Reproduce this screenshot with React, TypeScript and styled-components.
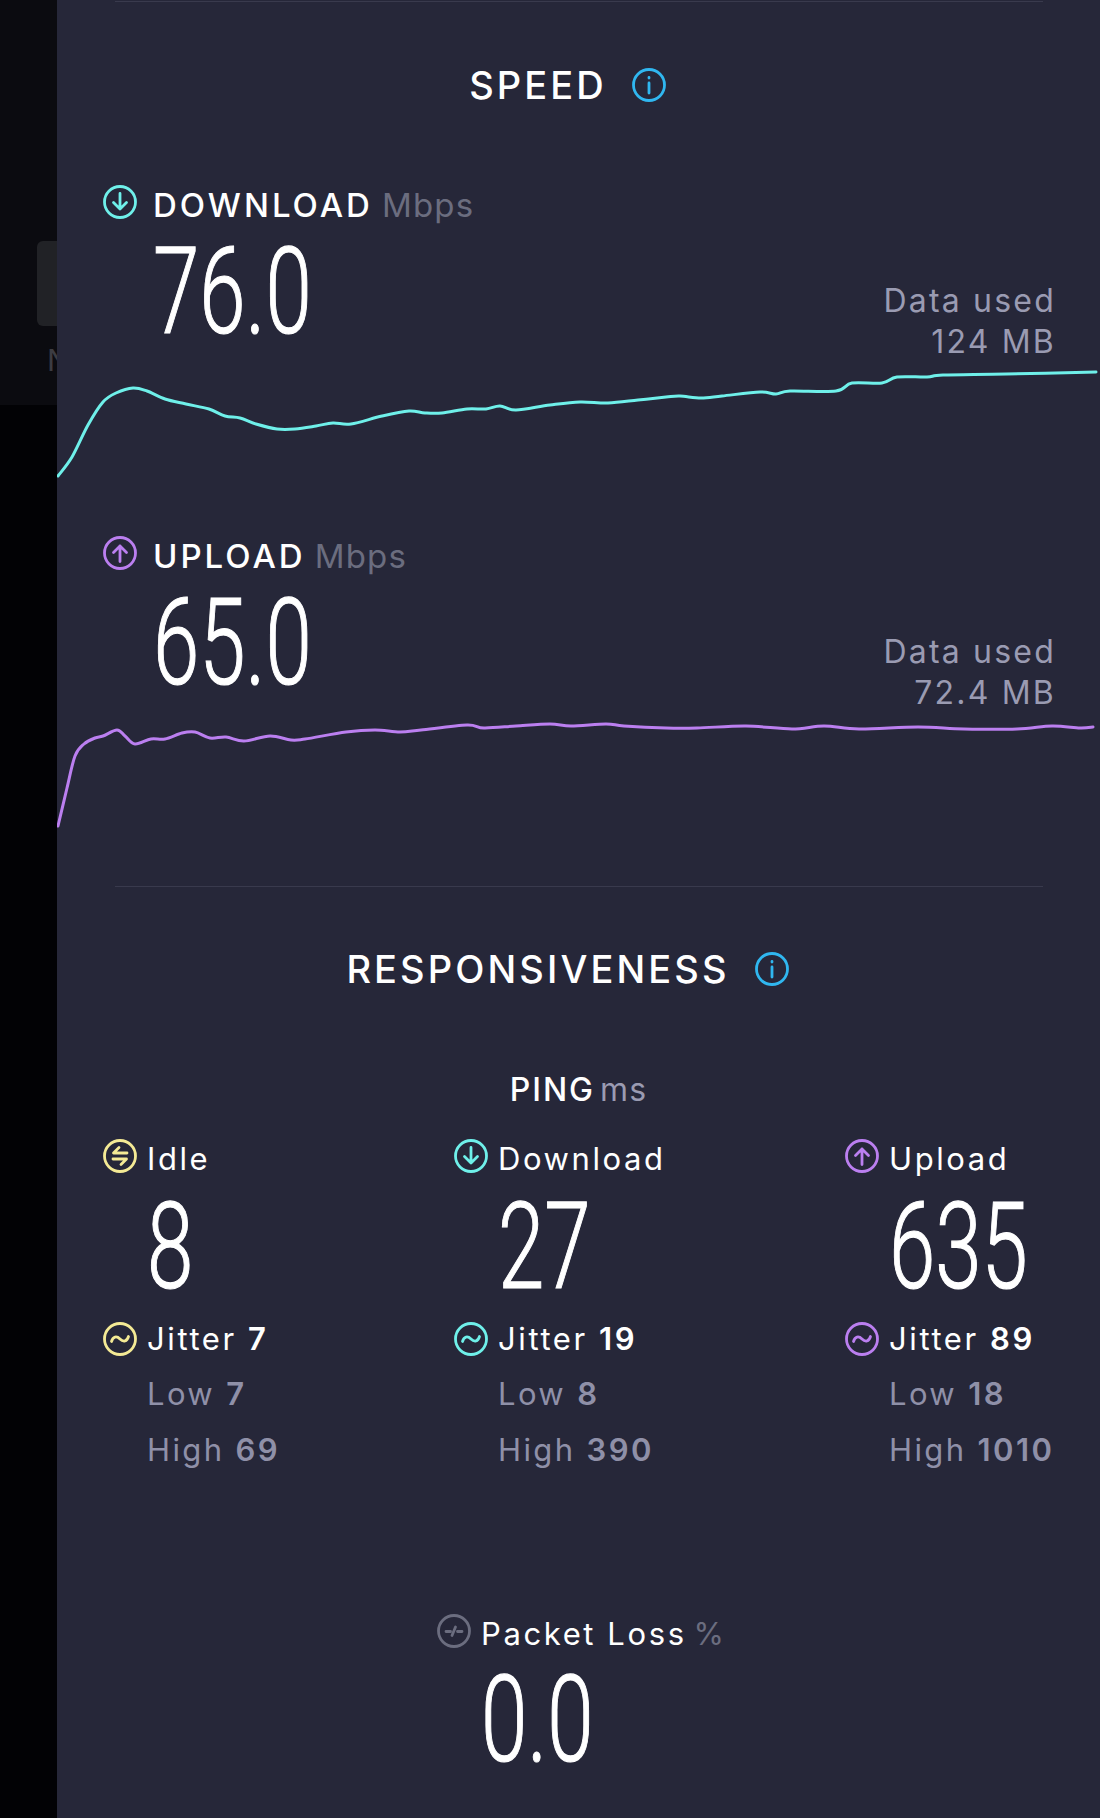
import styled, { createGlobalStyle } from 'styled-components';

const GlobalStyle = createGlobalStyle`
  html, body { margin: 0; padding: 0; background: #020205; }
  body { font-family: Inter, "Noto Sans", sans-serif; }
`;

const CYAN = '#6ff0ea';
const PURPLE = '#bb7ff0';
const YELLOW = '#f4ea95';
const BLUE = '#30b7f0';
const GRAY = '#6b6d7f';

type Pt = [number, number];

const downloadLine: Pt[] = [[58,476],[72,457],[88,425],[103,402],[116,393],[133,388],[147,391],[165,399],[186,404],[209,409],[225,416],[240,418],[256,424],[277,429],[295,429],[316,426],[333,423],[351,424],[382,416],[409,411],[425,413],[442,413],[467,409],[486,409],[500,406],[516,410],[550,405],[580,402],[608,403],[638,400],[666,397],[680,396],[701,398],[722,396],[760,392],[776,394],[790,391],[836,391],[852,383],[882,383],[897,377],[927,377],[943,375],[1006,374],[1096,372]];
const uploadLine: Pt[] = [[58,825],[67,787],[75,755],[84,743],[95,737],[103,735],[117,729],[125,735],[135,743],[151,738],[165,738],[182,732],[195,731],[210,737],[226,736],[244,740],[270,735],[291,739],[305,738],[346,731],[375,729],[400,731],[421,729],[467,724],[484,727],[516,725],[550,723],[571,725],[606,723],[624,725],[666,727],[697,727],[746,725],[792,728],[824,725],[859,728],[918,726],[964,728],[1017,728],[1052,725],[1080,727],[1093,726]];

// catmull-rom through the sampled points, shifted into the chart's own box
const toPath = (pts: Pt[], top: number) => {
  const p = pts.map(([x, y]): Pt => [x - 57, y - top]);
  let d = `M${p[0][0]} ${p[0][1]}`;
  for (let i = 0; i < p.length - 1; i++) {
    const a = p[Math.max(i - 1, 0)];
    const b = p[i];
    const c = p[i + 1];
    const e = p[Math.min(i + 2, p.length - 1)];
    d += `C${(b[0] + (c[0] - a[0]) / 6).toFixed(1)} ${(b[1] + (c[1] - a[1]) / 6).toFixed(1)} ${(c[0] - (e[0] - b[0]) / 6).toFixed(1)} ${(c[1] - (e[1] - b[1]) / 6).toFixed(1)} ${c[0]} ${c[1]}`;
  }
  return d;
};

const Page = styled.div`
  display: flex;
  width: 1100px;
  height: 1818px;
  overflow: hidden;
`;

const Rail = styled.div`
  width: 57px;
  flex: none;
  overflow: hidden;
`;

const RailTop = styled.div`
  height: 405px;
  box-sizing: border-box;
  padding: 241px 0 0 37px;
  background: #0b0b10;
`;

const RailButton = styled.div`
  width: 40px;
  height: 85px;
  border-radius: 6px;
  background: #212226;
`;

const RailLabel = styled.div`
  margin: 16px 0 0 10px;
  font-size: 30px;
  line-height: 36px;
  color: #3c3c42;
`;

const Panel = styled.div`
  flex: 1;
  background: #262739;
  color: #fff;
`;

const Divider = styled.div<{ $top: number }>`
  height: 1px;
  margin: ${p => p.$top}px 57px 0 58px;
  background: #393a4d;
`;

const SectionTitle = styled.div<{ $top: number }>`
  display: flex;
  align-items: center;
  justify-content: center;
  gap: 25px;
  height: 40px;
  margin-top: ${p => p.$top}px;
  padding-right: 22px;
  font-size: 38px;
  font-weight: 500;
  letter-spacing: 3.1px;
`;

const Metric = styled.div<{ $top: number }>`
  display: flex;
  justify-content: space-between;
  margin-top: ${p => p.$top}px;
  padding: 0 46px;
`;

const MetricMain = styled.div`
  padding-bottom: 26px;
`;

const MetricHeader = styled.div`
  display: flex;
  align-items: center;
  gap: 16px;
  height: 34px;
  font-size: 33px;
  font-weight: 500;
  letter-spacing: 3px;
  white-space: nowrap;
`;

const HeaderText = styled.span`
  padding-top: 5px;
`;

const Unit = styled.span<{ $color?: string; $gap: number }>`
  margin-left: ${p => p.$gap}px;
  font-weight: 400;
  letter-spacing: 1.2px;
  color: ${p => p.$color ?? GRAY};
`;

const Value = styled.div<{ $top: number; $left: number }>`
  height: 90px;
  margin: ${p => p.$top}px 0 0 ${p => p.$left}px;
  font-family: Roboto, sans-serif;
  font-size: 120px;
  font-weight: 300;
  line-height: 93px;
  white-space: nowrap;
  -webkit-text-stroke: 1.2px #fff;
  transform: scaleX(0.695);
  transform-origin: left center;
`;

const DataUsed = styled.div`
  align-self: flex-end;
  margin-right: -2px;
  text-align: right;
  font-size: 32px;
  line-height: 41px;
  letter-spacing: 2.2px;
  color: #9a9bb2;
`;

const Chart = styled.svg`
  display: block;
  width: 1043px;
  height: 120px;
  margin-top: 3px;
  fill: none;
  stroke-width: 3;
  stroke-linecap: round;
  stroke-linejoin: round;
`;

const PingTitle = styled.div`
  height: 36px;
  margin-top: 83px;
  line-height: 36px;
  font-size: 32px;
  font-weight: 500;
  letter-spacing: 2px;
  text-align: center;
`;

const PingGrid = styled.div`
  display: grid;
  grid-template-columns: 351px 391px 1fr;
  margin-top: 31px;
  padding-left: 46px;
`;

const PingColumn = styled.div``;

const IconRow = styled.div<{ $top?: number }>`
  display: flex;
  align-items: center;
  gap: 10px;
  height: 34px;
  margin-top: ${p => p.$top ?? 0}px;
  font-size: 31px;
  letter-spacing: 2.6px;
  white-space: nowrap;
`;

const RowText = styled.span<{ $drop?: number }>`
  line-height: 34px;
  padding-top: ${p => p.$drop ?? 0}px;
`;

const StrongNum = styled.b`
  font-weight: 600;
`;

const SubRow = styled.div`
  height: 56px;
  padding-left: 44px;
  font-size: 31px;
  letter-spacing: 2.4px;
  line-height: 56px;
  color: #8f90a8;
`;

const SubRows = styled.div`
  margin-top: 10px;
`;

const PacketBlock = styled.div`
  margin-top: 136px;
  padding-left: 380px;
`;

const IconSvg = styled.svg`
  display: block;
  flex: none;
  width: 34px;
  height: 34px;
  fill: none;
  stroke-width: 2.8;
  stroke-linecap: round;
  stroke-linejoin: round;
`;

type Kind = 'down' | 'up' | 'idle' | 'jitter' | 'info' | 'loss';

function Icon({ kind, color }: { kind: Kind; color: string }) {
  return (
    <IconSvg viewBox="0 0 34 34" stroke={color}>
      <circle cx="17" cy="17" r="15.5" />
      {kind === 'down' && <path d="M17 8.5V24M10.5 17.5L17 24L23.5 17.5" />}
      {kind === 'up' && <path d="M17 25.5V10M10.5 16.5L17 10L23.5 16.5" />}
      {kind === 'idle' && <path d="M24 14H10.500L16 8.500M10 20H23.500L18 25.500" />}
      {kind === 'jitter' && <path d="M8.500 19.500C10 14.500 13.500 13.500 17 17C20.500 20.500 24 19.500 25.500 14.500" />}
      {kind === 'info' && <path d="M17 15V25M17 9.500V10" />}
      {kind === 'loss' && <path d="M9 17.500H13.500M15 21.500L18.500 13M20.500 17.500H25" />}
    </IconSvg>
  );
}

const pingColumns = [
  { label: 'Idle', kind: 'idle' as Kind, color: YELLOW, value: '8', jitter: 7, low: 7, high: 69 },
  { label: 'Download', kind: 'down' as Kind, color: CYAN, value: '27', jitter: 19, low: 8, high: 390 },
  { label: 'Upload', kind: 'up' as Kind, color: PURPLE, value: '635', jitter: 89, low: 18, high: 1010 },
];

export default function App() {
  return (
    <Page>
      <GlobalStyle />
      <Rail>
        <RailTop>
          <RailButton />
          <RailLabel>N</RailLabel>
        </RailTop>
      </Rail>
      <Panel>
        <Divider $top={1} />
        <SectionTitle $top={63}>
          SPEED
          <Icon kind="info" color={BLUE} />
        </SectionTitle>

        <Metric $top={80}>
          <MetricMain>
            <MetricHeader>
              <Icon kind="down" color={CYAN} />
              <HeaderText>DOWNLOAD<Unit $gap={9}>Mbps</Unit></HeaderText>
            </MetricHeader>
            <Value $top={27} $left={50}>76.0</Value>
          </MetricMain>
          <DataUsed>Data used<br />124 MB</DataUsed>
        </Metric>
        <Chart viewBox="0 0 1043 120" stroke={CYAN}>
          <path d={toPath(downloadLine, 365)} />
        </Chart>

        <Metric $top={51}>
          <MetricMain>
            <MetricHeader>
              <Icon kind="up" color={PURPLE} />
              <HeaderText>UPLOAD<Unit $gap={9}>Mbps</Unit></HeaderText>
            </MetricHeader>
            <Value $top={27} $left={50}>65.0</Value>
          </MetricMain>
          <DataUsed>Data used<br />72.4 MB</DataUsed>
        </Metric>
        <Chart viewBox="0 0 1043 120" stroke={PURPLE}>
          <path d={toPath(uploadLine, 715)} />
        </Chart>

        <Divider $top={50} />
        <SectionTitle $top={62}>
          RESPONSIVENESS
          <Icon kind="info" color={BLUE} />
        </SectionTitle>

        <PingTitle>PING<Unit $gap={5} $color="#9a9bb2">ms</Unit></PingTitle>

        <PingGrid>
          {pingColumns.map(c => (
            <PingColumn key={c.label}>
              <IconRow>
                <Icon kind={c.kind} color={c.color} />
                <RowText $drop={5}>{c.label}</RowText>
              </IconRow>
              <Value $top={28} $left={44}>{c.value}</Value>
              <IconRow $top={31}>
                <Icon kind="jitter" color={c.color} />
                <RowText>Jitter <StrongNum>{c.jitter}</StrongNum></RowText>
              </IconRow>
              <SubRows>
                <SubRow>Low <StrongNum>{c.low}</StrongNum></SubRow>
                <SubRow>High <StrongNum>{c.high}</StrongNum></SubRow>
              </SubRows>
            </PingColumn>
          ))}
        </PingGrid>

        <PacketBlock>
          <IconRow>
            <Icon kind="loss" color={GRAY} />
            <RowText $drop={5}>Packet Loss<Unit $gap={7}>%</Unit></RowText>
          </IconRow>
          <Value $top={26} $left={44}>0.0</Value>
        </PacketBlock>
      </Panel>
    </Page>
  );
}
